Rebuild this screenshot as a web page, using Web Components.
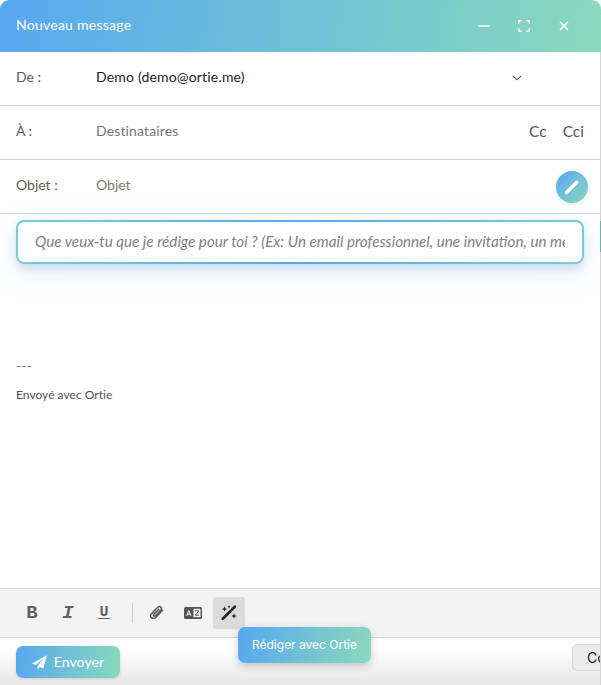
<!DOCTYPE html>
<html lang="fr">
<head>
<meta charset="utf-8">
<title>Nouveau message</title>
<style>
  html, body { margin: 0; height: 100%; overflow: hidden; background: #fff; }
  body { font-family: Lato, "Noto Sans", sans-serif; }
</style>
</head>
<body>
<compose-window>
  <compose-header slot="header" title-text="Nouveau message"></compose-header>
  <compose-row label="De :">
    <span style="color:#222;letter-spacing:.18px">Demo (demo@ortie.me)</span>
    <svg slot="end" width="10" height="6" viewBox="0 0 10 6" style="margin:0 79px 2px 0"><path d="M.8.8 5 4.800 9.200.8" fill="none" stroke="#555" stroke-width="1.100"/></svg>
  </compose-row>
  <compose-row label="À :">
    <span style="color:#777;letter-spacing:.14px">Destinataires</span>
    <span slot="end" style="font-size:15.5px;color:#555;display:flex;gap:16px;margin:0 17px 4px 0"><span>Cc</span><span>Cci</span></span>
  </compose-row>
  <compose-row label="Objet :">
    <span style="color:#777">Objet</span>
    <pen-button slot="end" style="margin-right:13px"></pen-button>
  </compose-row>
  <compose-body></compose-body>
  <compose-toolbar></compose-toolbar>
  <compose-footer></compose-footer>
</compose-window>

<script>
const GRAD = 'linear-gradient(100deg, #57a8ef 0%, #8ad9bd 100%)';

class ComposeWindow extends HTMLElement {
  constructor() {
    super();
    this.attachShadow({ mode: 'open' });
    this.shadowRoot.innerHTML = `
      <style>
        :host { display: flex; flex-direction: column; position: relative; width: 601px; height: 685px; overflow: hidden; }
        .rail { position: absolute; right: 0; top: 52px; bottom: 0; width: 1px; background: linear-gradient(#d4d4d4 169px, #63b8a8 169px, #63b8a8 200px, #d4d4d4 200px); }
      </style>
      <slot name="header"></slot>
      <slot></slot>
      <div class="rail"></div>
    `;
  }
}

class ComposeHeader extends HTMLElement {
  constructor() {
    super();
    this.attachShadow({ mode: 'open' });
  }

  connectedCallback() {
    this.shadowRoot.innerHTML = `
      <style>
        :host { display: flex; align-items: center; height: 52px; flex: none; padding: 0 17px 0 16px; color: #fff; background: ${GRAD}; border-radius: 9px 9px 0 0; font-size: 14px; }
        .title { flex: 1; padding-bottom: 4px; letter-spacing: .25px; }
        .icons { display: flex; align-items: center; gap: 28px; margin-right: 14px; }
        svg { display: block; }
      </style>
      <div class="title">${this.getAttribute('title-text')}</div>
      <div class="icons">
        <svg width="12" height="12" viewBox="0 0 12 12"><path d="M0 6h12" stroke="#fff" stroke-width="1.500"/></svg>
        <svg width="12" height="12" viewBox="0 0 12 12" fill="none" stroke="#fff" stroke-width="1.500"><path d="M.8 3.600V.8h2.800M8.400.8h2.800v2.800M11.200 8.400v2.800H8.400M3.600 11.200H.8V8.400"/></svg>
        <svg width="12" height="12" viewBox="0 0 12 12" fill="none" stroke="#fff" stroke-width="1.600"><path d="M2 2l8 8M10 2l-8 8"/></svg>
      </div>
    `;
  }
}

class ComposeRow extends HTMLElement {
  constructor() {
    super();
    this.attachShadow({ mode: 'open' });
  }

  connectedCallback() {
    this.shadowRoot.innerHTML = `
      <style>
        :host { display: flex; align-items: center; height: 53px; flex: none; padding-left: 16px; border-bottom: 1px solid #d8d8d8; font-size: 14px; }
        .label { width: 80px; color: #5a5a5a; padding-bottom: 4px; box-sizing: border-box; }
        .value { flex: 1; padding-bottom: 4px; }
      </style>
      <div class="label">${this.getAttribute('label')}</div>
      <div class="value"><slot></slot></div>
      <slot name="end"></slot>
    `;
  }
}

class PenButton extends HTMLElement {
  constructor() {
    super();
    this.attachShadow({ mode: 'open' });
    this.shadowRoot.innerHTML = `
      <style>
        :host { display: flex; align-items: center; justify-content: center; width: 32px; height: 32px; border-radius: 50%; background: linear-gradient(135deg, #57a8ef, #8ad9bd); box-shadow: 0 1px 4px rgba(0,0,0,.12); }
      </style>
      <svg width="16" height="16" viewBox="0 0 16 16"><path d="M2.500 13.500 12.800 3.200" stroke="#fff" stroke-width="3.400" stroke-linecap="round"/></svg>
    `;
  }
}

class ComposeBody extends HTMLElement {
  constructor() {
    super();
    this.attachShadow({ mode: 'open' });
    this.shadowRoot.innerHTML = `
      <style>
        :host { display: block; flex: 1; min-height: 0; padding: 6px 17px 0 16px; box-sizing: border-box; }
        .prompt { height: 44px; box-sizing: border-box; border: 2px solid transparent; border-radius: 8px; background: linear-gradient(#fff, #fff) padding-box, linear-gradient(280deg, #7ccdd2 0%, #57a8ef 50%, #7ccdd2 100%) border-box; box-shadow: 0 5px 9px rgba(70,130,170,.2), 0 8px 32px rgba(87,168,239,.16); display: flex; align-items: center; padding: 0 17px; }
        .ph { font-style: italic; font-size: 15.2px; color: #808080; white-space: nowrap; overflow: hidden; flex: 1; padding-bottom: 3px; }
        .sep { margin-top: 93px; font-size: 14px; color: #777; height: 17px; line-height: 17px; }
        .sig { margin-top: 13px; font-size: 12px; line-height: 15px; color: #505050; letter-spacing: .03px; }
      </style>
      <div class="prompt"><div class="ph">Que veux-tu que je rédige pour toi ? (Ex: Un email professionnel, une invitation, un message...)</div></div>
      <div class="sep">---</div>
      <div class="sig">Envoyé avec Ortie</div>
    `;
  }
}

class ComposeToolbar extends HTMLElement {
  constructor() {
    super();
    this.attachShadow({ mode: 'open' });
    this.shadowRoot.innerHTML = `
      <style>
        :host { display: flex; align-items: center; gap: 4px; height: 50px; flex: none; box-sizing: border-box; padding: 0 16px; background: #f3f3f3; border-top: 1px solid #d8d8d8; border-bottom: 1px solid #d8d8d8; }
        .b { width: 32px; height: 32px; display: flex; align-items: center; justify-content: center; border-radius: 3px; }
        .on { background: #dcdcdc; }
        .div { width: 1px; height: 20px; background: #d0d0d0; margin: 0 4px 0 8px; }
        .t { font-family: "Liberation Mono", monospace; font-weight: 700; font-size: 19px; color: #626262; line-height: 1; }
        .u { border-bottom: 1.500px solid #626262; font-size: 15px; line-height: 11px; height: 11px; width: 12px; text-align: center; display: block; }
        svg { display: block; }
      </style>
      <div class="b t">B</div>
      <div class="b t" style="font-style:italic">I</div>
      <div class="b t"><span class="u">U</span></div>
      <div class="div"></div>
      <div class="b">
        <svg width="16" height="16" viewBox="0 0 16 16" fill="none" stroke="#5c5c5c" stroke-width="1.500" stroke-linecap="round"><path d="M13.600 5.200 7 12.200c-1.500 1.500-3.700 1.300-4.600.4-1-1-1-2.700.2-4L8.800 2.300c1-1 2.300-1 3.100-.2.8.8.8 2-.1 3L6.300 10.700c-.5.500-1.200.500-1.600.100-.4-.4-.3-1 .1-1.500l5-5.100"/></svg>
      </div>
      <div class="b">
        <svg width="18" height="12" viewBox="0 0 18 12"><rect width="18" height="12" rx="1.500" fill="#555"/><rect x="9.500" y="1.800" width="7" height="8.400" fill="#f3f3f3"/><path d="M2.800 8.800 4.800 3.500l2 5.300M3.500 7.200h2.600" fill="none" stroke="#f3f3f3" stroke-width="1"/><path d="M11.200 3.800h3.600l-3.400 4.400h3.600" fill="none" stroke="#555" stroke-width="1"/></svg>
      </div>
      <div class="b on">
        <svg width="16" height="16" viewBox="0 0 16 16" fill="#222"><path d="M1.800 13.800 9.300 6.300M10.500 5.100 13.800 1.800" stroke="#222" stroke-width="2.700" stroke-linecap="round"/><path d="M3.500 1.200l.8 2 2 .8-2 .8-.8 2-.8-2-2-.8 2-.8zM13 8.200l.8 2 2 .8-2 .8-.8 2-.8-2-2-.8 2-.8zM8 .2l.5 1.100 1.100.5-1.100.5L8 3.400l-.5-1.100-1.100-.5 1.100-.5z"/></svg>
      </div>
    `;
  }
}

class ComposeFooter extends HTMLElement {
  constructor() {
    super();
    this.attachShadow({ mode: 'open' });
    this.shadowRoot.innerHTML = `
      <style>
        :host { display: block; position: relative; height: 47px; flex: none; background: linear-gradient(#fff 25%, #e6e6e6 100%); }
        .send { width: 104px; height: 32px; margin: 8px 0 0 16px; box-sizing: border-box; border-radius: 7px; background: ${GRAD}; color: #fff; font-size: 14px; display: flex; align-items: center; justify-content: center; gap: 7px; box-shadow: 0 1px 3px rgba(0,0,0,.12); }
        .send span { padding-bottom: 2px; letter-spacing: .1px; }
        .tip { position: absolute; left: 238px; top: -11px; width: 133px; height: 36px; border-radius: 7px; background: ${GRAD}; color: #fff; font: 12px/36px Inter, "Liberation Sans", sans-serif; text-align: center; box-shadow: 0 3px 8px rgba(0,0,0,.2); }
        .other { position: absolute; left: 572px; top: 6px; width: 60px; height: 27px; box-sizing: border-box; border: 1px solid #d6d6d6; border-radius: 5px; background: #ececec; color: #222; font: 14px/25px Inter, "Liberation Sans", sans-serif; padding-left: 14px; }
      </style>
      <div class="send">
        <svg width="15" height="15" viewBox="0 0 15 15" fill="#fff"><path d="M14.800.2 0 8.500l3.800 1.600L12 3 5.600 10.900v3.900l2.300-2.900 3.500 1.500z"/></svg>
        <span>Envoyer</span>
      </div>
      <div class="tip">Rédiger avec Ortie</div>
      <div class="other">Co</div>
    `;
  }
}

customElements.define('compose-window', ComposeWindow);
customElements.define('compose-header', ComposeHeader);
customElements.define('compose-row', ComposeRow);
customElements.define('pen-button', PenButton);
customElements.define('compose-body', ComposeBody);
customElements.define('compose-toolbar', ComposeToolbar);
customElements.define('compose-footer', ComposeFooter);
</script>
</body>
</html>
